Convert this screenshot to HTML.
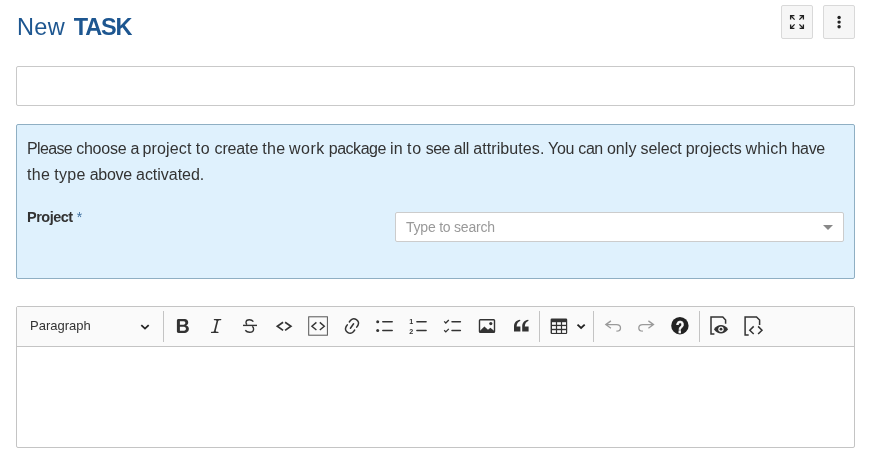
<!DOCTYPE html>
<html lang="en">
<head>
<meta charset="utf-8">
<title>New TASK</title>
<style>
*{box-sizing:border-box}
html,body{margin:0;padding:0;background:#fff}
h2,.info,.toolbar,svg.icons{will-change:transform}
body{width:875px;height:464px;position:relative;overflow:hidden;font-family:"Liberation Sans",sans-serif;color:#333}
.abs{position:absolute}
h2{position:absolute;left:17px;top:10.5px;margin:0;font-size:23.5px;line-height:32px;font-weight:400;color:#1d5690;letter-spacing:0.4px;white-space:nowrap}
h2 b{font-weight:700;position:absolute;left:56.8px;top:-0.4px;letter-spacing:-1.2px}
.btn{position:absolute;top:5px;width:32px;height:34px;background:#f6f6f6;border:1px solid #d9d9d9;border-radius:2px}
.subject{position:absolute;left:16px;top:66px;width:839px;height:40px;border:1px solid #c9c9c9;border-radius:2px;background:#fff}
.info{position:absolute;left:16px;top:124px;width:839px;height:155px;background:#dff1fd;border:1px solid #8fafc3;border-radius:2px}
.info p{position:absolute;left:0;top:0;margin:0;font-size:16px;line-height:26px;color:#333;white-space:nowrap}
.info p span{position:absolute;white-space:nowrap}
.label{position:absolute;left:10px;top:82px;font-size:14.5px;line-height:20px;font-weight:700;color:#333;white-space:nowrap;letter-spacing:-0.5px}
.label span{font-weight:400;color:#3f6f9f;font-size:14px;position:relative;top:-0.5px;left:0.5px}
.select{position:absolute;left:378px;top:87px;width:449px;height:30px;background:#fff;border:1px solid #ccc;border-radius:2px}
.select .ph{position:absolute;left:10px;top:4px;font-size:14px;line-height:20px;color:#999;letter-spacing:-0.22px}
.select .arrow{position:absolute;right:10px;top:12px;width:0;height:0;border-left:5px solid transparent;border-right:5px solid transparent;border-top:5px solid #888}
.editor{position:absolute;left:16px;top:306px;width:839px;height:142px;border:1px solid #c4c4c4;border-radius:2px;background:#fff}
.toolbar{position:absolute;left:0;top:0;width:837px;height:40px;background:#fafafa;border-bottom:1px solid #c4c4c4}
.para{position:absolute;left:13px;top:10px;font-size:13px;line-height:18px;color:#333}
.sep{position:absolute;top:4px;width:1px;height:31px;background:#c4c4c4}
svg{position:absolute;overflow:visible}
</style>
</head>
<body>
<h2>New <b>TASK</b></h2>
<div class="btn" style="left:781px"></div>
<div class="btn" style="left:823px"></div>
<div class="subject"></div>
<div class="info">
  <p><span style="left:10.0px;top:11px;letter-spacing:-0.63px">Please</span> <span style="left:59.2px;top:11px;letter-spacing:-0.25px">choose</span> <span style="left:113.4px;top:11px;letter-spacing:-0.95px">a</span> <span style="left:125.4px;top:11px;letter-spacing:0.17px">project</span> <span style="left:178.7px;top:11px;letter-spacing:0.73px">to</span> <span style="left:197.6px;top:11px;letter-spacing:-0.15px">create</span> <span style="left:245.3px;top:11px;letter-spacing:0.29px">the</span> <span style="left:272.1px;top:11px;letter-spacing:0.43px">work</span> <span style="left:311.7px;top:11px;letter-spacing:-0.46px">package</span> <span style="left:373.1px;top:11px;letter-spacing:0.16px">in</span> <span style="left:390.0px;top:11px;letter-spacing:0.72px">to</span> <span style="left:408.8px;top:11px;letter-spacing:-0.66px">see</span> <span style="left:436.7px;top:11px;letter-spacing:-0.16px">all</span> <span style="left:456.3px;top:11px;letter-spacing:0.08px">attributes.</span> <span style="left:531.0px;top:11px;letter-spacing:-0.26px">You</span> <span style="left:561.3px;top:11px;letter-spacing:-0.42px">can</span> <span style="left:589.9px;top:11px;letter-spacing:0.07px">only</span> <span style="left:623.6px;top:11px;letter-spacing:-0.14px">select</span> <span style="left:668.7px;top:11px;letter-spacing:0.01px">projects</span> <span style="left:728.6px;top:11px;letter-spacing:0.20px">which</span> <span style="left:774.6px;top:11px;letter-spacing:-0.38px">have</span>
  <span style="left:10.0px;top:37px;letter-spacing:0.29px">the</span> <span style="left:37.2px;top:37px;letter-spacing:0.29px">type</span> <span style="left:72.7px;top:37px;letter-spacing:-0.27px">above</span> <span style="left:119.0px;top:37px;letter-spacing:-0.02px">activated.</span></p>
  <div class="label">Project <span>*</span></div>
  <div class="select"><span class="ph">Type to search</span><span class="arrow"></span></div>
</div>
<div class="editor">
  <div class="toolbar">
    <span class="para">Paragraph</span>
    <div class="sep" style="left:146px"></div>
    <div class="sep" style="left:522px"></div>
    <div class="sep" style="left:576px"></div>
    <div class="sep" style="left:682px"></div>
  </div>
</div>

<svg class="icons" width="875" height="464" viewBox="0 0 875 464" style="left:0;top:0" fill="none" stroke="none">
  <!-- expand -->
  <g stroke="#222" stroke-width="1.3" fill="none" stroke-linecap="butt">
    <path d="M790.6 19.4V15.6H794.4M790.8 15.8L794.6 19.6"/>
    <path d="M803.4 19.4V15.6H799.6M803.2 15.8L799.4 19.6"/>
    <path d="M790.6 24.6V28.4H794.4M790.8 28.2L794.6 24.4"/>
    <path d="M803.4 24.6V28.4H799.6M803.2 28.2L799.4 24.4"/>
  </g>
  <!-- more dots -->
  <g fill="#222"><circle cx="839.1" cy="17.5" r="1.7"/><circle cx="839.1" cy="22.1" r="1.7"/><circle cx="839.1" cy="26.7" r="1.7"/></g>
  <!-- paragraph chevron -->
  <path d="M141.3 325.2L145 328.6L148.7 325.2" stroke="#222" stroke-width="1.8" fill="none"/>
  <!-- bold -->
  <svg x="172.9" y="316" width="20" height="20" viewBox="0 0 20 20"><path fill="#333" d="M10.187 17H5.773c-.637 0-1.092-.138-1.364-.415-.273-.277-.409-.718-.409-1.323V4.738c0-.617.14-1.062.419-1.332.279-.27.73-.406 1.354-.406h4.68c.69 0 1.288.041 1.793.124.506.083.96.242 1.360.478.341.197.644.447.906.75a3.262 3.262 0 0 1 .808 2.162c0 1.401-.722 2.426-2.167 3.075C15.05 10.175 16 11.315 16 13.010a3.756 3.756 0 0 1-2.296 3.504 6.100 6.100 0 0 1-1.517.377c-.571.073-1.238.110-2 .110zm-.217-6.217H7v4.087h3.069c1.977 0 2.965-.69 2.965-2.072 0-.707-.256-1.220-.768-1.537-.512-.319-1.277-.478-2.296-.478zM7 5.130v3.619h2.606c.729 0 1.292-.067 1.690-.2a1.600 1.600 0 0 0 .910-.765c.165-.267.247-.566.247-.897 0-.707-.26-1.176-.778-1.409-.519-.232-1.310-.348-2.375-.348H7z"/></svg>
  <!-- italic -->
  <svg x="206.2" y="316" width="20" height="20" viewBox="0 0 20 20"><path fill="#333" d="m9.586 14.633.021.004c-.036.335.095.655.393.962.082.083.173.150.274.201h1.474a.6.6 0 1 1 0 1.200H5.304a.6.6 0 0 1 0-1.200h1.150c.474-.07.809-.182 1.005-.334.157-.122.291-.32.404-.597l2.416-9.550a1.053 1.053 0 0 0-.281-.823 1.120 1.120 0 0 0-.442-.296H8.150a.6.6 0 0 1 0-1.200h6.443a.6.6 0 1 1 0 1.200h-1.195c-.376.056-.65.155-.823.296-.215.175-.423.439-.623.790l-2.366 9.347z"/></svg>
  <!-- strikethrough -->
  <g stroke="#333" stroke-width="1.4" fill="none">
    <path d="M253.4 321.6C252.3 320.3 251 319.8 249.5 319.8C247.3 319.8 246 321 246 322.5C246 323.4 246.4 324.1 247 324.6"/>
    <path d="M252.2 326.4C253.1 327 253.6 327.9 253.6 329C253.6 331 252 332.3 249.6 332.3C247.8 332.3 246.3 331.6 245.3 330.3"/>
    <path d="M243 325.4H257"/>
  </g>
  <!-- code -->
  <g stroke="#333" stroke-width="1.7" fill="none">
    <path d="M283.1 322.2L277.3 326.3L283.1 330.4"/>
    <path d="M285.1 322.2L290.9 326.3L285.1 330.4"/>
  </g>
  <!-- code block -->
  <rect x="308.7" y="316.8" width="18.7" height="18.4" stroke="#555" stroke-width="1" fill="none"/>
  <g stroke="#333" stroke-width="1.4" fill="none">
    <path d="M316.4 322.4L311.9 326.2L316.4 330"/>
    <path d="M319.8 322.4L324.3 326.2L319.8 330"/>
  </g>
  <!-- link -->
  <svg x="342" y="316" width="20" height="20" viewBox="0 0 20 20"><path fill="#333" d="m11.077 15 .991-1.416a.75.75 0 1 1 1.229.86l-1.148 1.640a.748.748 0 0 1-.217.206 5.251 5.251 0 0 1-8.503-5.955.741.741 0 0 1 .12-.274l1.147-1.639a.75.75 0 1 1 1.228.86L4.933 10.700l.006.003a3.750 3.750 0 0 0 6.132 4.294l.006.004zm5.494-5.335a.748.748 0 0 1-.12.274l-1.147 1.639a.75.75 0 1 1-1.228-.86l.86-1.230a3.750 3.750 0 0 0-6.144-4.301l-.86 1.229a.75.75 0 0 1-1.229-.86l1.148-1.640a.748.748 0 0 1 .217-.206 5.251 5.251 0 0 1 8.503 5.955zm-4.563-2.532a.75.75 0 0 1 .184 1.045l-3.155 4.505a.75.75 0 1 1-1.229-.86l3.155-4.506a.75.75 0 0 1 1.045-.184z"/></svg>
  <!-- bulleted list -->
  <g fill="#333"><circle cx="377.7" cy="321.7" r="1.5"/><circle cx="377.7" cy="330.6" r="1.5"/></g>
  <g stroke="#333" stroke-width="1.5" stroke-linecap="round"><path d="M382.8 321.7H392.2M382.8 330.6H392.2"/></g>
  <!-- numbered list -->
  <g fill="#333" font-family="Liberation Sans, sans-serif" font-weight="700" font-size="7.2"><text x="409.2" y="324.1">1</text><text x="409.2" y="334.1">2</text></g>
  <g stroke="#333" stroke-width="1.5" stroke-linecap="round"><path d="M416.9 321.7H426.1M416.9 330.6H426.1"/></g>
  <!-- todo list -->
  <g stroke="#333" stroke-width="1.3" fill="none"><path d="M444.2 321.4L445.8 323L448.8 320M444.2 330.3L445.8 331.9L448.8 328.9"/></g>
  <g stroke="#333" stroke-width="1.5" stroke-linecap="round"><path d="M452 321.7H460.4M452 330.6H460.4"/></g>
  <!-- image -->
  <rect x="479.5" y="319.7" width="15" height="12.6" rx="0.8" stroke="#333" stroke-width="1.4" fill="none"/>
  <path d="M480 332V330.8L484.4 326.6L488 329.8L490.4 327.8L494 330.8V332Z" fill="#333"/>
  <circle cx="490.8" cy="323.6" r="1.6" fill="#333"/>
  <!-- quote -->
  <g fill="#333">
    <path id="q" d="M514 331.6V326.4C514 322.5 516.5 320.3 520 319.8L520.4 320.8C518 321.8 516.8 323.5 516.6 326.4H520.4V331.6Z"/>
    <path d="M522.2 331.6V326.4C522.2 322.5 524.7 320.3 528.2 319.8L528.6 320.8C526.2 321.8 525 323.5 524.8 326.4H528.6V331.6Z"/>
  </g>
  <!-- table -->
  <rect x="550.6" y="318.5" width="16.6" height="15.5" rx="1.2" fill="#333"/>
  <g fill="#fafafa">
    <rect x="552" y="322.2" width="3.9" height="2.6"/><rect x="557.1" y="322.2" width="3.8" height="2.6"/><rect x="562.1" y="322.2" width="3.9" height="2.6"/>
    <rect x="552" y="326.1" width="3.9" height="2.7"/><rect x="557.1" y="326.1" width="3.8" height="2.7"/><rect x="562.1" y="326.1" width="3.9" height="2.7"/>
    <rect x="552" y="330.2" width="3.9" height="2.7"/><rect x="557.1" y="330.2" width="3.8" height="2.7"/><rect x="562.1" y="330.2" width="3.9" height="2.7"/>
  </g>
  <path d="M577.5 324.6L581.1 328L584.7 324.6" stroke="#222" stroke-width="1.8" fill="none"/>
  <!-- undo / redo -->
  <g stroke="#9a9a9a" stroke-width="1.3" fill="none">
    <path d="M610.9 320.9L605.8 324.6L610.9 328.3M605.8 324.6H616.5C619.5 324.6 620.5 326.5 620.5 328C620.5 329.8 619.2 331.2 616.4 331.2"/>
    <path d="M648.4 320.9L653.5 324.6L648.4 328.3M653.5 324.6H642.8C639.8 324.6 638.8 326.500 638.8 328C638.8 329.8 640.1 331.2 642.9 331.2"/>
  </g>
  <!-- help -->
  <circle cx="679.9" cy="325.7" r="8.7" fill="#222"/>
  <text x="0" y="0" text-anchor="middle" font-family="Liberation Sans, sans-serif" font-weight="700" font-size="16.5" fill="#fafafa" stroke="#fafafa" stroke-width="0.5" transform="translate(680.1 332.6) scale(0.82 1)">?</text>
  <!-- preview -->
  <path d="M714.4 334H711V316.9H722.8L725.6 320V323.7" stroke="#333" stroke-width="1.5" fill="none"/>
  <path d="M713.9 329.2C716 326 718.5 324.9 721 324.9C723.5 324.9 726 326 728.1 329.200C726 332.3 723.5 333.4 721 333.4C718.5 333.4 716 332.3 713.9 329.2Z" fill="#333"/>
  <circle cx="721" cy="329.2" r="2.7" fill="#fafafa"/><circle cx="721" cy="329.2" r="1.4" fill="#333"/>
  <!-- source -->
  <path d="M748.7 335H745.1V316.9H756.5L759.6 320V324.9" stroke="#333" stroke-width="1.5" fill="none"/>
  <g stroke="#333" stroke-width="1.5" fill="none"><path d="M753.7 326.4L749.8 330.200L753.7 334M758.100 326.400L762 330.200L758.100 334"/></g>
</svg>
</body>
</html>
